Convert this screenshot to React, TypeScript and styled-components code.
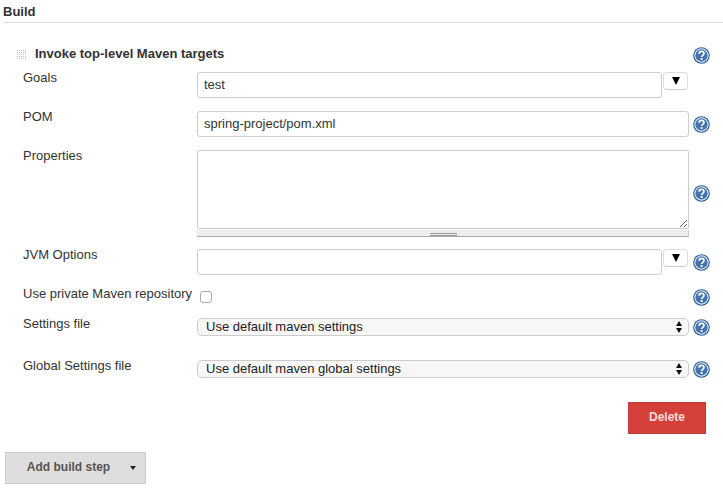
import React from 'react';
import styled, { createGlobalStyle } from 'styled-components';

const GlobalStyle = createGlobalStyle`
  html, body {
    margin: 0;
    padding: 0;
    background: #fff;
    color: #333;
    font-family: "Liberation Sans", Arial, sans-serif;
    font-size: 13px;
  }
`;

const HelpIcon: React.FC = () => (
  <HelpSvg viewBox="0 0 18 18" aria-hidden="true">
    <circle cx="9" cy="9" r="8.8" fill="#2f5f9b" />
    <circle cx="9" cy="9" r="7.6" fill="#eef3f8" />
    <circle cx="9" cy="9" r="6.5" fill="#4474ad" />
    <path
      d="M6.5 7.2c0-1.6 1.1-2.5 2.6-2.5s2.5 1 2.5 2.2c0 1.9-2.5 1.9-2.5 3.7"
      fill="none"
      stroke="#fff"
      strokeWidth="1.8"
    />
    <rect x="8.1" y="11.7" width="2" height="2" fill="#fff" />
  </HelpSvg>
);

const SelectArrows: React.FC = () => (
  <UpDown viewBox="0 0 6 12" aria-hidden="true">
    <path d="M3 0 6 5H0zM3 12 0 7h6z" fill="#111" />
  </UpDown>
);

const App: React.FC = () => (
  <>
    <GlobalStyle />
    <Page>
      <SectionHeader>Build</SectionHeader>

      <StepTitleRow>
        <DragHandle />
        <StepTitle>Invoke top-level Maven targets</StepTitle>
        <HelpCell $offset={3}>
          <HelpIcon />
        </HelpCell>
      </StepTitleRow>

      <Row $gap={9}>
        <Label>Goals</Label>
        <FieldWithMenu>
          <TextInput defaultValue="test" />
          <MenuButton type="button">
            <MenuArrow />
          </MenuButton>
        </FieldWithMenu>
      </Row>

      <Row $gap={13}>
        <Label>POM</Label>
        <TextInput defaultValue="spring-project/pom.xml" />
        <HelpCell $align="center">
          <HelpIcon />
        </HelpCell>
      </Row>

      <Row $gap={13}>
        <Label>Properties</Label>
        <div>
          <TextArea />
          <Grip />
        </div>
        <HelpCell $align="center">
          <HelpIcon />
        </HelpCell>
      </Row>

      <Row $gap={12}>
        <Label>JVM Options</Label>
        <FieldWithMenu>
          <TextInput />
          <MenuButton type="button">
            <MenuArrow />
          </MenuButton>
        </FieldWithMenu>
        <HelpCell $align="center">
          <HelpIcon />
        </HelpCell>
      </Row>

      <CheckRow $gap={13}>
        <Label>Use private Maven repository</Label>
        <CheckBox type="checkbox" />
        <HelpCell $align="center">
          <HelpIcon />
        </HelpCell>
      </CheckRow>

      <Row $gap={12}>
        <Label>Settings file</Label>
        <SelectWrap>
          <Select defaultValue="default">
            <option value="default">Use default maven settings</option>
          </Select>
          <SelectArrows />
        </SelectWrap>
        <HelpCell $align="center">
          <HelpIcon />
        </HelpCell>
      </Row>

      <Row $gap={24}>
        <Label>Global Settings file</Label>
        <SelectWrap>
          <Select defaultValue="default">
            <option value="default">Use default maven global settings</option>
          </Select>
          <SelectArrows />
        </SelectWrap>
        <HelpCell $align="center">
          <HelpIcon />
        </HelpCell>
      </Row>

      <DeleteRow>
        <DeleteButton type="button">Delete</DeleteButton>
      </DeleteRow>

      <AddButton type="button">
        Add build step
        <AddCaret />
      </AddButton>
    </Page>
  </>
);

const Page = styled.div`
  width: 723px;
  height: 489px;
  overflow: hidden;
  box-sizing: border-box;
`;

const SectionHeader = styled.div`
  height: 23px;
  margin-left: 3px;
  padding-top: 4px;
  box-sizing: border-box;
  border-bottom: 1px solid #ddd;
  font-size: 13px;
  font-weight: bold;
  line-height: 15px;
  color: #333;
`;

const StepTitleRow = styled.div`
  display: flex;
  align-items: center;
  height: 18px;
  margin-top: 22px;
  padding-left: 16px;
`;

const DragHandle = styled.div`
  width: 11px;
  height: 11px;
  margin-right: 8px;
  background-color: #bbb;
  background-image: linear-gradient(#fff 1px, transparent 1px),
    linear-gradient(90deg, #fff 1px, transparent 1px);
  background-size: 2px 2px;
`;

const StepTitle = styled.div`
  flex: 1;
  margin-top: -1px;
  font-size: 13px;
  line-height: 15px;
  font-weight: bold;
  color: #333;
`;

const HelpCell = styled.div<{ $align?: string; $offset?: number }>`
  grid-column: 3;
  width: 34px;
  padding-left: 4px;
  padding-top: ${(p) => p.$offset || 0}px;
  box-sizing: border-box;
  display: flex;
  align-self: ${(p) => p.$align || 'auto'};
  align-items: center;
`;

const HelpSvg = styled.svg`
  display: block;
  width: 17px;
  height: 17px;
`;

const Row = styled.div<{ $gap: number }>`
  display: grid;
  grid-template-columns: 174px 492px 34px;
  align-items: start;
  margin-top: ${(p) => p.$gap}px;
  padding-left: 23px;
`;

const CheckRow = styled(Row)`
  min-height: 18px;
`;

const Label = styled.div`
  margin-top: -1px;
  font-size: 13px;
  line-height: 13px;
  color: #333;
`;

const FieldWithMenu = styled.div`
  display: flex;
  align-items: flex-start;
  gap: 1px;
  padding-right: 1px;
`;

const TextInput = styled.input`
  display: block;
  flex: 1;
  width: 100%;
  min-width: 0;
  height: 26px;
  box-sizing: border-box;
  padding: 0 5px 1px 6px;
  border: 1px solid #ccc;
  border-radius: 3px;
  background: #fff;
  font-family: "Liberation Sans", Arial, sans-serif;
  font-size: 13px;
  color: #333;
`;

const MenuButton = styled.button`
  display: flex;
  align-items: center;
  justify-content: center;
  flex: none;
  width: 25px;
  height: 18px;
  padding: 0;
  border: 1px solid #ddd;
  border-bottom-color: #ccc;
  border-radius: 4px;
  background: #fff;
`;

const MenuArrow = styled.span`
  width: 0;
  height: 0;
  border-left: 4.5px solid transparent;
  border-right: 4.5px solid transparent;
  border-top: 8px solid #000;
`;

const TextArea = styled.textarea`
  display: block;
  width: 100%;
  height: 79px;
  box-sizing: border-box;
  margin: 0;
  padding: 5px;
  border: 1px solid #ccc;
  border-radius: 2px;
  background: #fff;
  resize: vertical;
`;

const Grip = styled.div`
  position: relative;
  height: 6px;
  margin-top: 1px;
  background: #eee;
  border-bottom: 1px solid #aaa;
  border-right: 1px solid #ccc;
  box-sizing: content-box;

  &::after {
    content: '';
    position: absolute;
    left: 233px;
    top: 3px;
    width: 27px;
    height: 1px;
    border-top: 1px solid #999;
    border-bottom: 1px solid #999;
  }
`;

const CheckBox = styled.input`
  appearance: none;
  display: block;
  width: 12px;
  height: 12px;
  margin: 3px 0 0 3px;
  border: 1px solid #aaa;
  border-radius: 3px;
  background: #fff;
  box-sizing: border-box;
`;

const SelectWrap = styled.div`
  position: relative;
  height: 18px;
`;

const Select = styled.select`
  appearance: none;
  display: block;
  width: 100%;
  height: 18px;
  box-sizing: border-box;
  margin: 0;
  padding: 0 0 1px 8px;
  border: 1px solid #ccc;
  border-radius: 5px;
  background: #f7f7f7;
  font-family: "Liberation Sans", Arial, sans-serif;
  font-size: 13px;
  color: #222;
`;

const UpDown = styled.svg`
  position: absolute;
  right: 7px;
  top: 3px;
  width: 6px;
  height: 12px;
  pointer-events: none;
`;

const DeleteRow = styled.div`
  display: flex;
  justify-content: flex-end;
  margin-top: 24px;
  padding-right: 17px;
`;

const DeleteButton = styled.button`
  width: 78px;
  height: 32px;
  padding: 0 0 2px;
  border: 1px solid #c23b37;
  background: #d5403b;
  color: #f6dedd;
  font-family: "Liberation Sans", Arial, sans-serif;
  font-size: 12px;
  font-weight: bold;
`;

const AddButton = styled.button`
  display: block;
  position: relative;
  width: 141px;
  height: 32px;
  margin: 18px 0 0 5px;
  padding: 0 14px 2px 0;
  border: 1px solid #ccc;
  background: #dedede;
  color: #555;
  font-family: "Liberation Sans", Arial, sans-serif;
  font-size: 12px;
  font-weight: bold;
`;

const AddCaret = styled.span`
  position: absolute;
  right: 9px;
  top: 13px;
  width: 0;
  height: 0;
  border-left: 3.5px solid transparent;
  border-right: 3.5px solid transparent;
  border-top: 4px solid #222;
`;

export default App;
